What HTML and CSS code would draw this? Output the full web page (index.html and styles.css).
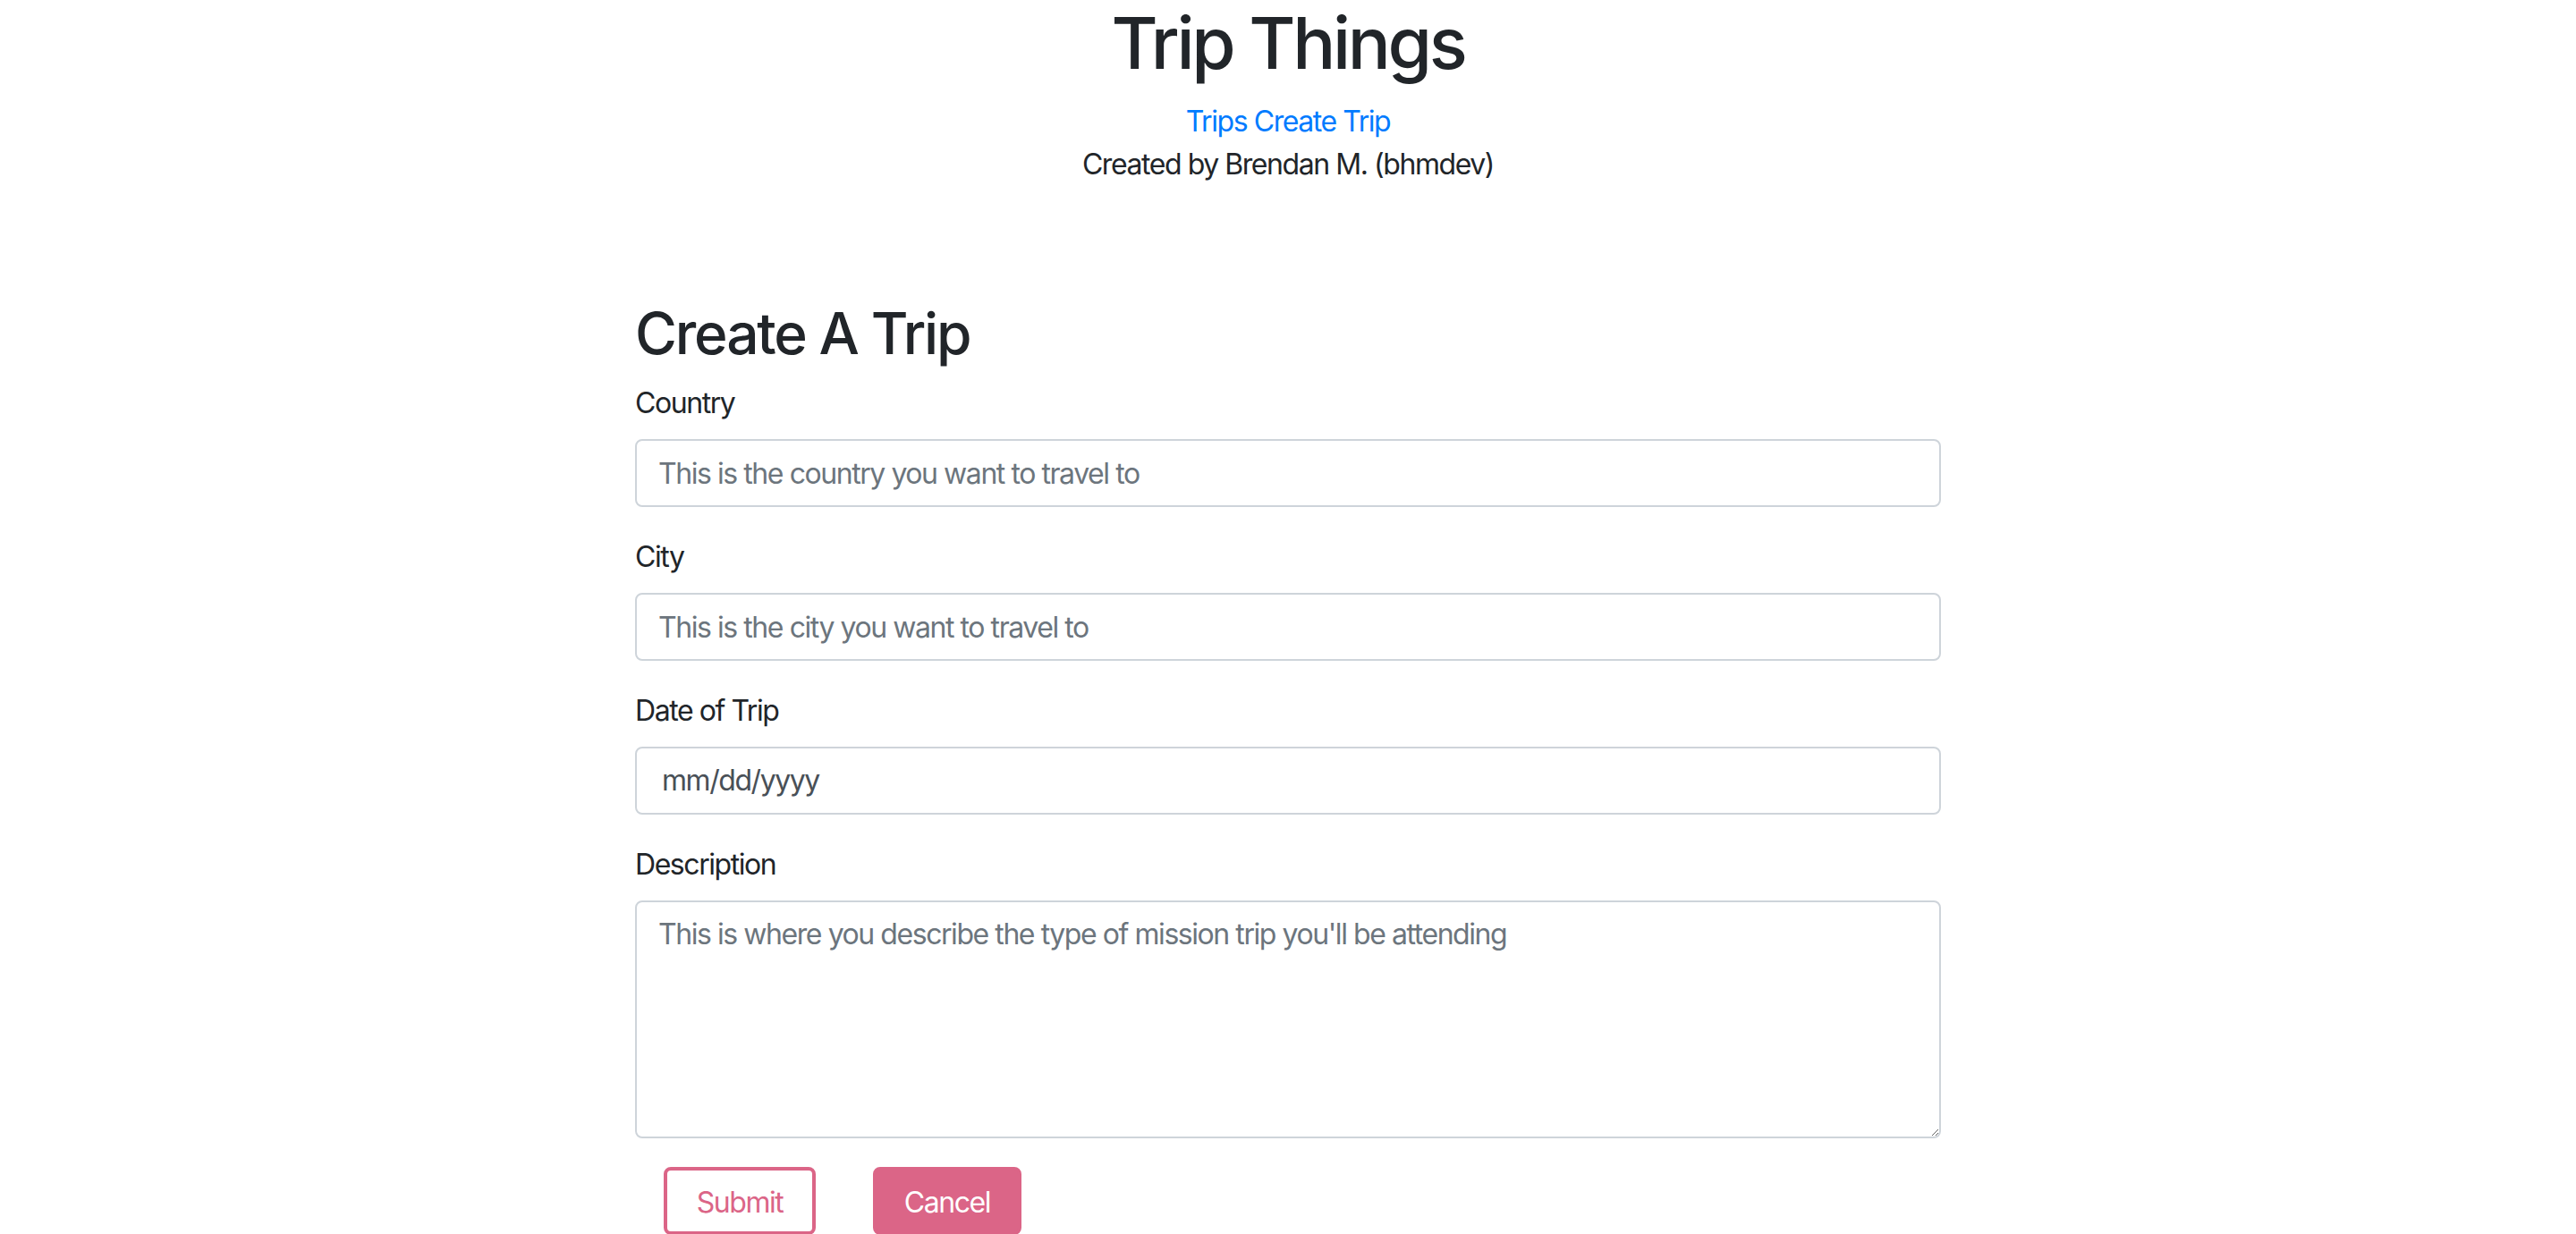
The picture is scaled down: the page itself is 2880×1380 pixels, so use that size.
FILE: index.html
```html
<!DOCTYPE html>
<html lang="en">
<head>
<meta charset="utf-8">
<title>Trip Things</title>
<link rel="stylesheet" href="styles.css">
</head>
<body>
<header class="site-header">
  <h1 class="site-title">Trip Things</h1>
  <nav class="site-nav"><a href="#">Trips</a> <a href="#">Create Trip</a></nav>
  <p class="credit">Created by Brendan M. (bhmdev)</p>
</header>
<main class="container">
  <h2 class="page-title">Create A Trip</h2>
  <form class="trip-form">
    <div class="form-group">
      <label class="form-label" for="country">Country</label>
      <input class="form-control" id="country" type="text" placeholder="This is the country you want to travel to">
    </div>
    <div class="form-group">
      <label class="form-label" for="city">City</label>
      <input class="form-control" id="city" type="text" placeholder="This is the city you want to travel to">
    </div>
    <div class="form-group">
      <label class="form-label" for="date">Date of Trip</label>
      <div class="form-control date-field">mm/dd/yyyy</div>
    </div>
    <div class="form-group last">
      <label class="form-label" for="desc">Description</label>
      <textarea class="form-control textarea" id="desc" rows="5" placeholder="This is where you describe the type of mission trip you'll be attending"></textarea>
    </div>
    <div class="actions">
      <button type="button" class="btn btn-outline">Submit</button>
      <button type="button" class="btn btn-solid">Cancel</button>
    </div>
  </form>
</main>
</body>
</html>
```
FILE: styles.css
```css
* { box-sizing: border-box; }
html, body { margin: 0; padding: 0; background: #fff; }
body {
  font-family: Inter, "Noto Sans", "Liberation Sans", sans-serif;
  font-size: 32px;
  line-height: 48px;
  color: #212529;
  letter-spacing: -0.045em;
}
.site-header { text-align: center; }
.site-title {
  margin: 0 0 16px;
  font-size: 80px;
  font-weight: 500;
  line-height: 96px;
  letter-spacing: -0.042em;
}
.site-nav a { color: #007bff; text-decoration: none; }
.credit { margin: 0 0 32px; }
.container {
  width: 1460px;
  margin: 126px auto 0;
}
.page-title {
  margin: 0 0 16px;
  font-size: 64px;
  font-weight: 500;
  line-height: 77px;
  letter-spacing: -0.034em;
}
.form-group { margin-bottom: 32px; }
.form-group.last { margin-bottom: 32px; }
.form-label { display: inline-block; margin-bottom: 16px; }
.form-control {
  display: block;
  width: 100%;
  height: 76px;
  padding: 12px 24px;
  font-family: inherit;
  font-size: 32px;
  line-height: 48px;
  letter-spacing: -0.045em;
  color: #495057;
  background: #fff;
  border: 2px solid #ced4da;
  border-radius: 8px;
  outline: none;
}
.form-control::placeholder { color: #6c757d; opacity: 1; }
.date-field { padding-left: 28px; }
.textarea { height: 266px; resize: vertical; }
.actions { display: flex; padding-left: 32px; }
.btn {
  font-family: inherit;
  font-size: 32px;
  line-height: 48px;
  letter-spacing: -0.045em;
  height: 76px;
  padding: 12px 0;
  border-radius: 8px;
  border: 4px solid #db6587;
  text-align: center;
  cursor: pointer;
}
.btn-outline { width: 170px; background: #fff; color: #db6587; margin-right: 64px; }
.btn-solid { width: 166px; background: #db6587; color: #fff; border-color: #db6587; }
```
